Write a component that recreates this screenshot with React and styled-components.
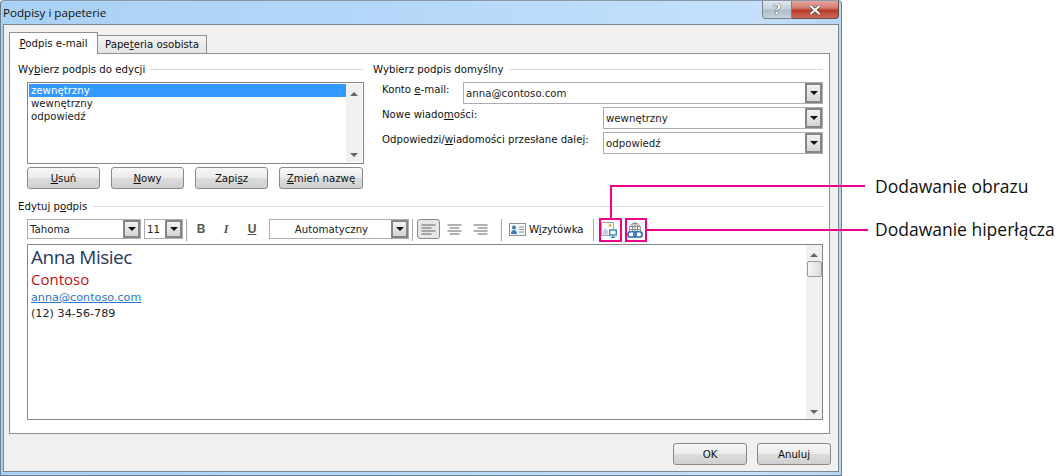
import React from 'react';
import styled, { createGlobalStyle } from 'styled-components';

const GlobalStyle = createGlobalStyle`
  html, body { margin: 0; padding: 0; background: #fff; }
  body { font-family: "DejaVu Sans", "Noto Sans", sans-serif; font-size: 10.2px; color: #111; }
  u { text-underline-offset: 1px; }
`;

const Page = styled.div`
  position: relative;
  width: 1058px;
  height: 476px;
  overflow: hidden;
  background: #fff;
`;

const Window = styled.div`
  box-sizing: border-box;
  width: 842px;
  height: 476px;
  display: flex;
  flex-direction: column;
  border: 1px solid #6d7f8f;
  border-top-color: #8a98a5;
  border-radius: 4px 4px 0 0;
  background: linear-gradient(90deg, #a9d0f5 0%, #b4d7f9 45%, #c4e0fb 90%, #b5d6f2 100%);
`;

const TitleBar = styled.div`
  height: 22px;
  flex: none;
  display: flex;
  justify-content: space-between;
  align-items: flex-start;
  padding-left: 2px;
  padding-right: 2px;
`;

const Title = styled.span`
  font-family: "Open Sans", "Noto Sans", sans-serif;
  font-size: 11.6px;
  line-height: 24px;
  color: #111;
`;

const Controls = styled.div`
  display: flex;
  height: 18px;
`;

const HelpButton = styled.div`
  width: 28px;
  display: flex;
  align-items: center;
  justify-content: center;
  border: 1px solid #77848f;
  border-top: none;
  border-radius: 0 0 0 4px;
  background: linear-gradient(180deg, #dfe7ee 0%, #c3cfda 48%, #aebdcb 52%, #c4d2de 100%);
  font: bold 13px "DejaVu Serif", serif;
  color: #fff;
  text-shadow: 0 0 1px #333, 0 0 1px #333;
`;

const CloseButton = styled.div`
  width: 46px;
  display: flex;
  align-items: center;
  justify-content: center;
  border: 1px solid #6e4a46;
  border-left: none;
  border-top: none;
  border-radius: 0 0 4px 0;
  background: linear-gradient(180deg, #e6a79e 0%, #d27e72 40%, #bb3a28 55%, #c9695a 100%);
`;

const Body = styled.div`
  flex: 1;
  margin: 1px 2px 3px 2px;
  display: flex;
  flex-direction: column;
  border: 1px solid #7a8894;
  background: #f0f0f0;
  padding: 7px 8px 0 5px;
`;

const Tabs = styled.div`
  display: flex;
  align-items: flex-end;
  height: 22px;
  margin-bottom: -1px;
  position: relative;
  z-index: 1;
`;

const Tab = styled.div`
  box-sizing: border-box;
  display: flex;
  align-items: center;
  justify-content: center;
  width: ${p => p.$w}px;
  height: ${p => (p.$active ? 22 : 19)}px;
  border: 1px solid #8e8f8f;
  border-bottom: ${p => (p.$active ? 'none' : '1px solid #8e8f8f')};
  background: ${p => (p.$active ? '#fff' : 'linear-gradient(180deg, #f3f3f3, #e4e4e4)')};
  margin-left: ${p => (p.$active ? 0 : -1)}px;
`;

const Panel = styled.div`
  box-sizing: border-box;
  width: 821px;
  height: 381px;
  border: 1px solid #8e8f8f;
  background: #fff;
  padding: 9px 5px 0 8px;
`;

const TopRow = styled.div`
  display: flex;
  gap: 9px;
`;

const LeftColumn = styled.div`
  width: 346px;
  flex: none;
`;

const RightColumn = styled.div`
  width: 450px;
  flex: none;
`;

const GroupTitle = styled.div`
  display: flex;
  align-items: center;
  height: 13px;
  gap: 5px;
  white-space: nowrap;
  &::after {
    content: '';
    flex: 1;
    height: 1px;
    background: #d5dfe5;
  }
`;

const ListArea = styled.div`
  box-sizing: border-box;
  height: 82px;
  margin: 6px 0 3px 9px;
  display: flex;
  border: 1px solid #82878c;
  padding: 1px;
`;

const ListItems = styled.div`
  flex: 1;
`;

const ListItem = styled.div`
  height: 13px;
  line-height: 13px;
  padding-left: 2px;
  background: ${p => (p.$selected ? '#3399ff' : 'transparent')};
  color: ${p => (p.$selected ? '#fff' : '#222')};
`;

const Scrollbar = styled.div`
  width: 16px;
  flex: none;
  display: flex;
  flex-direction: column;
  align-items: center;
  justify-content: space-between;
  background: #f0f0f0;
  padding: 8px 0 5px;
  box-sizing: border-box;
`;

const Thumb = styled.div`
  box-sizing: border-box;
  width: 15px;
  height: 16px;
  margin-top: 4px;
  margin-bottom: auto;
  border: 1px solid #9a9a9a;
  border-radius: 2px;
  background: linear-gradient(90deg, #f5f5f5, #dcdcdc);
`;

const ArrowUp = styled.span`
  border: 4px solid transparent;
  border-top: none;
  border-bottom: 4px solid #666;
`;

const ArrowDown = styled.span`
  border: 4px solid transparent;
  border-bottom: none;
  border-top: 4px solid #666;
`;

const ButtonRow = styled.div`
  display: flex;
  gap: 11px;
  margin-left: 9px;
`;

const Button = styled.div`
  box-sizing: border-box;
  width: ${p => p.$w || 73}px;
  height: 22px;
  display: flex;
  align-items: center;
  justify-content: center;
  border: 1px solid #8a8a8a;
  border-radius: 3px;
  background: linear-gradient(180deg, #f6f6f6 0%, #ebebeb 48%, #dcdcdc 52%, #cfcfcf 100%);
  color: #111;
`;

const FieldRow = styled.div`
  display: flex;
  justify-content: space-between;
  height: 22px;
  margin: 0 0 3px 9px;
`;

const FieldGroup = styled.div`
  margin-top: 6px;
`;

const FieldLabel = styled.span`
  line-height: 15px;
  white-space: nowrap;
`;

const Combo = styled.div`
  box-sizing: border-box;
  width: ${p => p.$w}px;
  height: ${p => p.$h || 22}px;
  margin-left: ${p => p.$left || 0}px;
  display: flex;
  align-items: center;
  justify-content: space-between;
  border: 1px solid #abadb3;
  background: #fff;
  padding-left: 2px;
  color: #222;
  white-space: nowrap;
`;

const ComboText = styled.span`
  flex: 1;
  text-align: ${p => (p.$center ? 'center' : 'left')};
`;

const ComboArrow = styled.div`
  box-sizing: border-box;
  align-self: stretch;
  width: 17px;
  flex: none;
  display: flex;
  align-items: center;
  justify-content: center;
  border: 2px solid #858585;
  background: linear-gradient(180deg, #f2f2f2, #d4d4d4);
  &::after {
    content: '';
    border: 4px solid transparent;
    border-bottom: none;
    border-top: 4px solid #111;
  }
`;

const EditGroup = styled.div`
  margin-top: 11px;
`;

const Toolbar = styled.div`
  display: flex;
  align-items: flex-start;
  height: 23px;
  margin: 6px 0 2px 9px;
  width: 796px;
`;

const Separator = styled.span`
  width: 1px;
  height: 22px;
  background: #a8a8a8;
  margin: 0 ${p => p.$right ?? 6}px 0 ${p => p.$left ?? 3}px;
`;

const FormatButton = styled.span`
  width: 16px;
  line-height: 20px;
  text-align: center;
  font-family: ${p => (p.$serif ? '"Liberation Serif", serif' : '"Liberation Sans", sans-serif')};
  font-size: 12px;
  font-weight: bold;
  font-style: ${p => (p.$italic ? 'italic' : 'normal')};
  text-decoration: ${p => (p.$underline ? 'underline' : 'none')};
  color: #555;
  margin-right: ${p => p.$gap || 0}px;
`;

const AlignButton = styled.span`
  box-sizing: border-box;
  width: 23px;
  height: 20px;
  display: flex;
  align-items: center;
  justify-content: center;
  border: 1px solid ${p => (p.$active ? '#8a8a8a' : 'transparent')};
  border-radius: 3px;
  background: ${p => (p.$active ? '#e6e6e6' : 'transparent')};
  margin-right: ${p => p.$gap || 0}px;
`;

const CardButton = styled.span`
  display: flex;
  align-items: center;
  height: 20px;
  gap: 3px;
  color: #111;
`;

const IconSlot = styled.span`
  width: 16px;
  height: 22px;
  display: flex;
  align-items: center;
  justify-content: center;
  margin-left: ${p => p.$left || 0}px;
`;

const Editor = styled.div`
  box-sizing: border-box;
  width: 796px;
  height: 176px;
  margin-left: 9px;
  display: flex;
  border: 1px solid #82878c;
`;

const EditorContent = styled.div`
  flex: 1;
  padding: 0 3px;
`;

const SignatureName = styled.div`
  font-family: "Open Sans", "Noto Sans", sans-serif;
  font-size: 19px;
  font-weight: 500;
  line-height: 24px;
  letter-spacing: -0.5px;
  color: #1f3a5f;
`;

const SignatureCompany = styled.div`
  font-family: "Open Sans", "Noto Sans", sans-serif;
  font-size: 15px;
  line-height: 21px;
  color: #c00f14;
`;

const SignatureLink = styled.div`
  font-size: 11.2px;
  line-height: 16px;
  color: #2a78c6;
  text-decoration: underline;
`;

const SignaturePhone = styled.div`
  font-size: 11.2px;
  line-height: 16px;
  color: #222;
`;

const Footer = styled.div`
  display: flex;
  justify-content: flex-end;
  gap: 10px;
  margin-top: 9px;
  width: 822px;
`;

const CalloutLayer = styled.svg`
  position: absolute;
  left: 0;
  top: 0;
  pointer-events: none;
`;

const CalloutLabel = styled.div`
  position: absolute;
  left: 875px;
  top: ${p => p.$top}px;
  font-family: "Open Sans", "Noto Sans", sans-serif;
  font-size: 17.5px;
  line-height: 20px;
  color: #111;
  white-space: nowrap;
`;

const AlignIcon = ({ mode }) => {
  const lines = [14, 10, 14, 10];
  return (
    <svg width="15" height="11" viewBox="0 0 15 11">
      {lines.map((len, i) => {
        const x = mode === 'left' ? 0.5 : mode === 'center' ? (15 - len) / 2 : 15 - len - 0.5;
        return <rect key={i} x={x} y={i * 3 + 0.5} width={len} height="1" fill="#666" />;
      })}
    </svg>
  );
};

const CardIcon = () => (
  <svg width="17" height="13" viewBox="0 0 17 13">
    <rect x="0.5" y="0.5" width="16" height="12" fill="#f4f6f8" stroke="#8a8f94" />
    <circle cx="5" cy="4.5" r="2" fill="#3f78b5" />
    <path d="M2 11c0-3 1.5-4 3-4s3 1 3 4z" fill="#3f78b5" />
    <path d="M10 4h5M10 6.5h5M10 9h5" stroke="#8a8f94" strokeWidth="1" />
  </svg>
);

const PictureIcon = () => (
  <svg width="16" height="16" viewBox="0 0 16 16">
    <path d="M9 13.5H.5V.5h12V7" fill="#fbfbfb" stroke="#a3a3a3" />
    <path d="M2 12.5V9l2.5-3L7 9v3.5z" fill="#bcd0e4" />
    <circle cx="9" cy="3.5" r="1.4" fill="#f2b04a" />
    <rect x="8.7" y="8" width="6.6" height="5" fill="#fff" stroke="#2f7dc0" strokeWidth="1.3" />
    <path d="M12 13.5v1.2M9.8 15.3h4.4" stroke="#2f7dc0" strokeWidth="1.2" />
  </svg>
);

const LinkIcon = () => (
  <svg width="16" height="16" viewBox="0 0 16 16">
    <path d="M2.5 9V6.5a5.5 5.5 0 0 1 11 0V9" fill="none" stroke="#8a8a8a" />
    <path d="M5.5 9V6C5.5 3 6.5 1 8 1s2.5 2 2.5 5v3M8 1v8M2.5 4.5h11M2.5 7.5h11" fill="none" stroke="#8a8a8a" />
    <rect x="0.8" y="9.8" width="8.4" height="5.2" rx="2.6" fill="#fff" stroke="#2f6fb0" strokeWidth="1.6" />
    <rect x="6.8" y="9.8" width="8.4" height="5.2" rx="2.6" fill="none" stroke="#2f6fb0" strokeWidth="1.6" />
  </svg>
);

export default function App() {
  return (
    <Page>
      <GlobalStyle />
      <Window>
        <TitleBar>
          <Title>Podpisy i papeterie</Title>
          <Controls>
            <HelpButton>?</HelpButton>
            <CloseButton>
              <svg width="12" height="10" viewBox="0 0 12 10">
                <path d="M1.5 1l9 8M10.5 1l-9 8" stroke="#4a4a4a" strokeWidth="3.4" />
                <path d="M1.5 1l9 8M10.5 1l-9 8" stroke="#fff" strokeWidth="2" />
              </svg>
            </CloseButton>
          </Controls>
        </TitleBar>
        <Body>
          <Tabs>
            <Tab $active $w={89}><span><u>P</u>odpis e-mail</span></Tab>
            <Tab $w={110}><span>Pape<u>t</u>eria osobista</span></Tab>
          </Tabs>
          <Panel>
            <TopRow>
              <LeftColumn>
                <GroupTitle><span>Wy<u>b</u>ierz podpis do edycji</span></GroupTitle>
                <ListArea>
                  <ListItems>
                    <ListItem $selected>zewnętrzny</ListItem>
                    <ListItem>wewnętrzny</ListItem>
                    <ListItem>odpowiedź</ListItem>
                  </ListItems>
                  <Scrollbar>
                    <ArrowUp />
                    <ArrowDown />
                  </Scrollbar>
                </ListArea>
                <ButtonRow>
                  <Button><span><u>U</u>suń</span></Button>
                  <Button><span><u>N</u>owy</span></Button>
                  <Button><span>Zapi<u>s</u>z</span></Button>
                  <Button $w={84}><span><u>Z</u>mień nazwę</span></Button>
                </ButtonRow>
              </LeftColumn>
              <RightColumn>
                <GroupTitle><span>Wybierz podpis domyślny</span></GroupTitle>
                <FieldGroup>
                  <FieldRow>
                    <FieldLabel>Konto <u>e</u>-mail:</FieldLabel>
                    <Combo $w={360}><ComboText>anna@contoso.com</ComboText><ComboArrow /></Combo>
                  </FieldRow>
                  <FieldRow>
                    <FieldLabel>Nowe wiado<u>m</u>ości:</FieldLabel>
                    <Combo $w={220}><ComboText>wewnętrzny</ComboText><ComboArrow /></Combo>
                  </FieldRow>
                  <FieldRow>
                    <FieldLabel>Odpowiedzi/<u>w</u>iadomości przesłane dalej:</FieldLabel>
                    <Combo $w={220}><ComboText>odpowiedź</ComboText><ComboArrow /></Combo>
                  </FieldRow>
                </FieldGroup>
              </RightColumn>
            </TopRow>
            <EditGroup>
              <GroupTitle><span>Edytuj p<u>o</u>dpis</span></GroupTitle>
              <Toolbar>
                <Combo $w={114} $h={20}><ComboText>Tahoma</ComboText><ComboArrow /></Combo>
                <Combo $w={39} $h={20} $left={3}><ComboText>11</ComboText><ComboArrow /></Combo>
                <Separator />
                <FormatButton $gap={9}>B</FormatButton>
                <FormatButton $gap={10} $italic $serif>I</FormatButton>
                <FormatButton $underline>U</FormatButton>
                <Combo $w={140} $h={20} $left={9}><ComboText $center>Automatyczny</ComboText><ComboArrow /></Combo>
                <Separator $right={4} />
                <AlignButton $active $gap={3}><AlignIcon mode="left" /></AlignButton>
                <AlignButton $gap={3}><AlignIcon mode="center" /></AlignButton>
                <AlignButton><AlignIcon mode="right" /></AlignButton>
                <Separator $left={9} $right={7} />
                <CardButton><CardIcon /><span>W<u>i</u>zytówka</span></CardButton>
                <Separator $left={9} $right={7} />
                <IconSlot><PictureIcon /></IconSlot>
                <IconSlot $left={10}><LinkIcon /></IconSlot>
              </Toolbar>
              <Editor>
                <EditorContent>
                  <SignatureName>Anna Misiec</SignatureName>
                  <SignatureCompany>Contoso</SignatureCompany>
                  <SignatureLink>anna@contoso.com</SignatureLink>
                  <SignaturePhone>(12) 34-56-789</SignaturePhone>
                </EditorContent>
                <Scrollbar>
                  <ArrowUp />
                  <Thumb />
                  <ArrowDown />
                </Scrollbar>
              </Editor>
            </EditGroup>
          </Panel>
          <Footer>
            <Button $w={74}>OK</Button>
            <Button $w={74}>Anuluj</Button>
          </Footer>
        </Body>
      </Window>
      <CalloutLayer width="1058" height="476" viewBox="0 0 1058 476" fill="none" stroke="#ec008c" strokeWidth="2">
        <path d="M611 218V186H865" />
        <path d="M647 230H868" />
        <rect x="600" y="219" width="21" height="22" />
        <rect x="626" y="219" width="20" height="22" />
      </CalloutLayer>
      <CalloutLabel $top={176}>Dodawanie obrazu</CalloutLabel>
      <CalloutLabel $top={219}>Dodawanie hiperłącza</CalloutLabel>
    </Page>
  );
}
